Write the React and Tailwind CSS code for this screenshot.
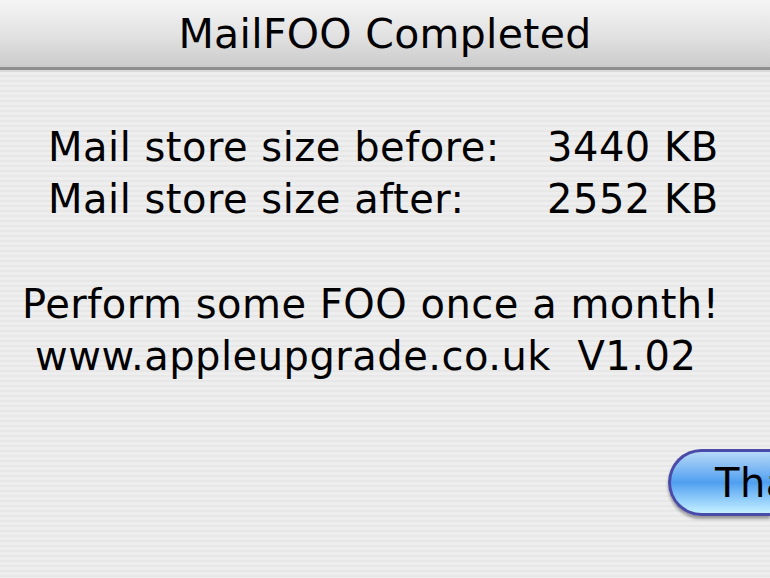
import React from "react";

const font = { fontFamily: '"DejaVu Sans", "Liberation Sans", sans-serif' };

export default function App() {
  return (
    <div
      className="w-[770px] h-[578px] overflow-hidden flex flex-col text-black"
      style={font}
    >
      {/* Title bar */}
      <div className="h-[67px] shrink-0 flex items-center justify-center bg-gradient-to-b from-[#f5f5f5] via-[#e3e3e3] to-[#cbcbcb]">
        <span className="text-[41px] tracking-[0.3px] pt-[2px]">MailFOO Completed</span>
      </div>
      <div className="h-[3px] shrink-0 bg-[#8e8e8e]" />
      <div className="h-[2px] shrink-0 bg-[#d9d9d9]" />

      {/* Body */}
      <div className="flex-1 flex flex-col bg-[repeating-linear-gradient(to_bottom,#eeeeee_0px,#eeeeee_3px,#e7e7e7_3px,#e7e7e7_5px)]">
        <div className="grid grid-cols-[499px_auto] pl-[48px] pt-[49px] text-[40px] leading-[52px] tracking-[0.5px]">
          <span>Mail store size before:</span>
          <span>3440 KB</span>
          <span>Mail store size after:</span>
          <span>2552 KB</span>
        </div>

        <div className="flex flex-col pl-[22px] pt-[53px] text-[40px] leading-[52px] tracking-[0.5px]">
          <span>Perform some FOO once a month!</span>
          <span className="pl-[13px] whitespace-pre">www.appleupgrade.co.uk  V1.02</span>
        </div>

        <div className="flex justify-end mt-[67px]">
          <div className="w-[102px] h-[67px] shrink-0 rounded-l-full border-[3px] border-r-0 border-[#4a4aa8] bg-gradient-to-b from-[#b5d8f7] via-[#4f9ff0] to-[#c4f0ff] shadow-[0_3px_3px_rgba(0,0,0,0.35)] flex items-center pl-[44px] overflow-hidden">
            <span className="text-[40px] tracking-[0.5px]">Thanks</span>
          </div>
        </div>
      </div>
    </div>
  );
}
